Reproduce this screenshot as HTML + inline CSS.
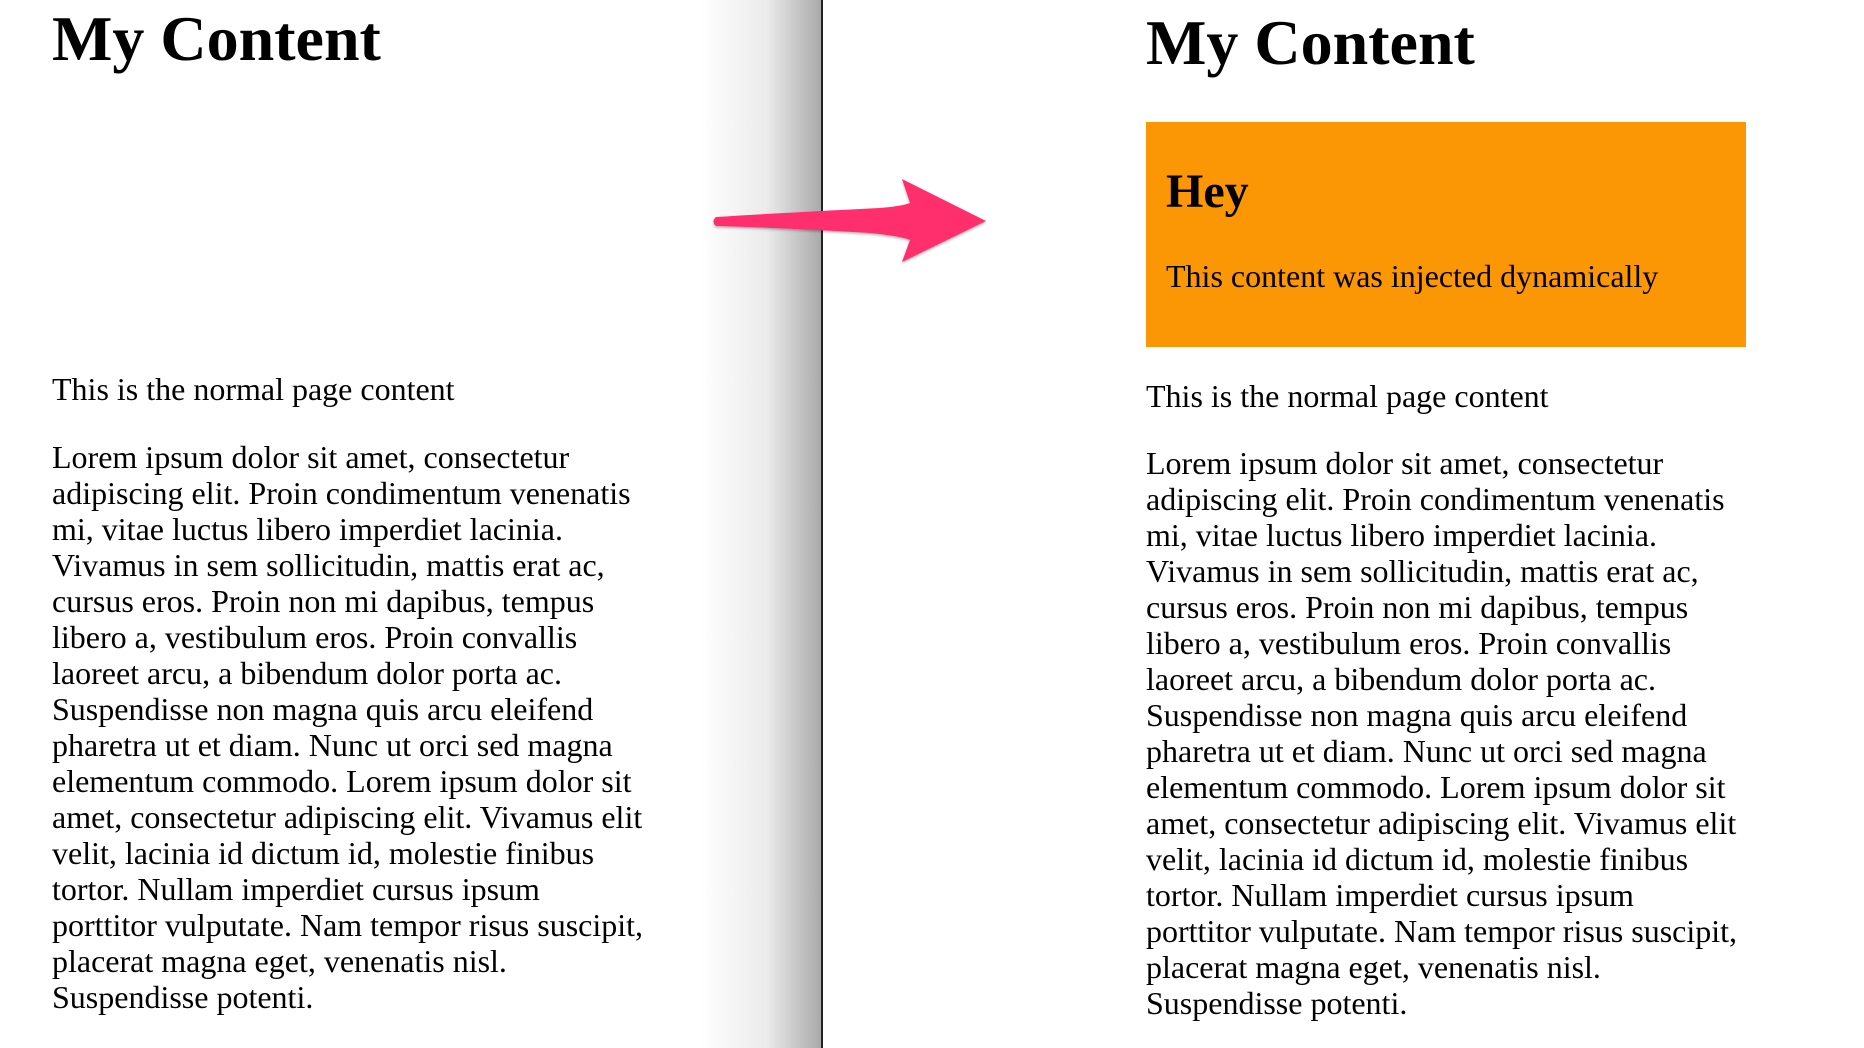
<!DOCTYPE html>
<html><head><meta charset="utf-8"><style>
html,body{margin:0;padding:0;width:1864px;height:1048px;overflow:hidden;background:#fff;}
body{position:relative;font-family:"Liberation Serif",serif;color:#000;}
.t{position:absolute;white-space:pre;font-size:32px;line-height:36px;}
.h{position:absolute;white-space:pre;font-size:64px;line-height:64px;font-weight:bold;}
#shade{position:absolute;left:700px;top:0;width:121px;height:1048px;background:linear-gradient(to right,rgba(255,255,255,0),rgba(235,235,235,1) 55%,rgba(170,170,170,1));}
#line{position:absolute;left:821px;top:0;width:2px;height:1048px;background:#222;}
#box{position:absolute;left:1146px;top:122px;width:600px;height:225px;background:#fb9604;}
</style></head><body>
<div id="shade"></div><div id="line"></div>
<div class="h" style="left:52px;top:7px">My Content</div>
<div class="t" style="left:52px;top:371px">This is the normal page content</div>
<div class="t" style="left:52px;top:439px">Lorem ipsum dolor sit amet, consectetur
adipiscing elit. Proin condimentum venenatis
mi, vitae luctus libero imperdiet lacinia.
Vivamus in sem sollicitudin, mattis erat ac,
cursus eros. Proin non mi dapibus, tempus
libero a, vestibulum eros. Proin convallis
laoreet arcu, a bibendum dolor porta ac.
Suspendisse non magna quis arcu eleifend
pharetra ut et diam. Nunc ut orci sed magna
elementum commodo. Lorem ipsum dolor sit
amet, consectetur adipiscing elit. Vivamus elit
velit, lacinia id dictum id, molestie finibus
tortor. Nullam imperdiet cursus ipsum
porttitor vulputate. Nam tempor risus suscipit,
placerat magna eget, venenatis nisl.
Suspendisse potenti.</div>

<div class="h" style="left:1146px;top:11px">My Content</div>
<div id="box"></div>
<div class="h" style="left:1166px;top:168px;font-size:48px;line-height:48px">Hey</div>
<div class="t" style="left:1166px;top:258px">This content was injected dynamically</div>
<div class="t" style="left:1146px;top:378px">This is the normal page content</div>
<div class="t" style="left:1146px;top:445px">Lorem ipsum dolor sit amet, consectetur
adipiscing elit. Proin condimentum venenatis
mi, vitae luctus libero imperdiet lacinia.
Vivamus in sem sollicitudin, mattis erat ac,
cursus eros. Proin non mi dapibus, tempus
libero a, vestibulum eros. Proin convallis
laoreet arcu, a bibendum dolor porta ac.
Suspendisse non magna quis arcu eleifend
pharetra ut et diam. Nunc ut orci sed magna
elementum commodo. Lorem ipsum dolor sit
amet, consectetur adipiscing elit. Vivamus elit
velit, lacinia id dictum id, molestie finibus
tortor. Nullam imperdiet cursus ipsum
porttitor vulputate. Nam tempor risus suscipit,
placerat magna eget, venenatis nisl.
Suspendisse potenti.</div>

<svg style="position:absolute;left:0;top:0" width="1864" height="1048">
<defs><filter id="s" x="-10%" y="-30%" width="120%" height="160%"><feDropShadow dx="0" dy="1.5" stdDeviation="1.2" flood-color="#000" flood-opacity="0.3"/></filter></defs>
<path filter="url(#s)" fill="#ff2d6c" d="M716 217 Q780 213 880 208 Q903 206 910 203 L902 179 L986 221 L902 262 L910 240 Q900 236 870 233 Q790 228 716 226 Q711 221.5 716 217 Z"/>
</svg>
</body></html>
